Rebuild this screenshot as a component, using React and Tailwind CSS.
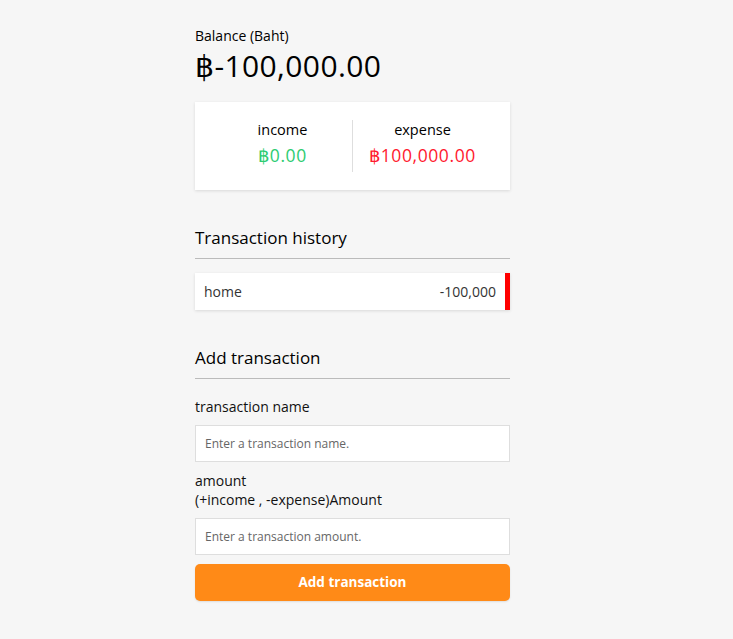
function App() {
  return (
    <div className="min-h-screen bg-[#f6f6f6] font-['Open_Sans',sans-serif] text-black">
      <div className="ml-[195px] w-[315px] pt-[27px]">
        <h4 className="text-[14px] leading-[18px]">Balance (Baht)</h4>
        <h1 className="mt-[1px] text-[30px] leading-[40px] tracking-[0.4px]">฿-100,000.00</h1>

        <div className="mt-[16px] flex bg-white px-[18px] pt-[18px] pb-[18px] shadow-[0_1px_3px_rgba(0,0,0,0.12)]">
          <div className="flex h-[52px] flex-1 flex-col items-center">
            <h4 className="text-[14.5px] leading-[20px]">income</h4>
            <p className="mt-[2px] text-[17.5px] leading-[26px] tracking-[0.6px] text-[#2ecc71]">฿0.00</p>
          </div>
          <div className="w-px bg-[#dedede]" />
          <div className="flex h-[52px] flex-1 flex-col items-center">
            <h4 className="text-[14.5px] leading-[20px]">expense</h4>
            <p className="mt-[2px] text-[17.5px] leading-[26px] tracking-[0.6px] text-[#ff1a2e]">฿100,000.00</p>
          </div>
        </div>

        <h3 className="mt-[36px] pb-[8px] text-[17px] font-medium leading-[24px] border-b border-[#bbbbbb]">
          Transaction history
        </h3>
        <ul className="mt-[14px]">
          <li className="flex h-[37px] items-center justify-between bg-white pl-[9px] pr-[9px] text-[14px] text-[#333] border-r-[5px] border-[#ff0000] shadow-[0_1px_3px_rgba(0,0,0,0.12)]">
            <span>home</span>
            <span>-100,000</span>
          </li>
        </ul>

        <h3 className="mt-[36px] pb-[8px] text-[17px] font-medium leading-[24px] border-b border-[#bbbbbb]">
          Add transaction
        </h3>
        <form>
          <div className="mt-[18px]">
            <label className="block text-[14px] leading-[20px] text-[#111]">transaction name</label>
            <input
              type="text"
              placeholder="Enter a transaction name."
              className="mt-[8px] block h-[37px] w-full border border-[#dedede] bg-white px-[9px] text-[12px] placeholder:text-[#666] outline-none"
            />
          </div>
          <div className="mt-[9px]">
            <label className="block text-[14px] leading-[19px] text-[#111]">
              amount <br />
              (+income , -expense)Amount
            </label>
            <input
              type="number"
              placeholder="Enter a transaction amount."
              className="mt-[9px] block h-[37px] w-full border border-[#dedede] bg-white px-[9px] text-[12px] placeholder:text-[#666] outline-none"
            />
          </div>
          <button className="mt-[9px] h-[37px] w-full rounded-[5px] bg-[#ff8a17] text-[13.5px] font-bold text-white shadow-[0_1px_2px_rgba(0,0,0,0.1)]">
            Add transaction
          </button>
        </form>
      </div>
    </div>
  );
}

export default App;
